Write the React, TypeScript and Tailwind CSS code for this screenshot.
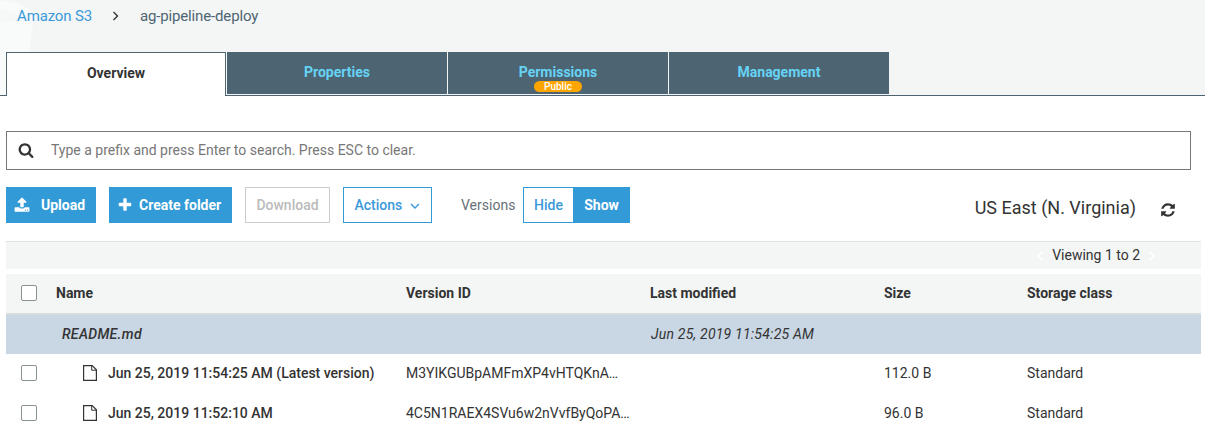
import type { ReactNode } from "react";

const paths = {
  search:
    "M1216 832q0-185-131.5-316.5t-316.5-131.5-316.5 131.5-131.5 316.5 131.5 316.5 316.5 131.5 316.5-131.5 131.5-316.5zm512 832q0 52-38 90t-90 38q-54 0-90-38l-343-342q-179 124-399 124-143 0-273.5-55.5t-225-150-150-225-55.5-273.5 55.5-273.5 150-225 225-150 273.5-55.5 273.5 55.5 225 150 150 225 55.5 273.5q0 220-124 399l343 343q37 37 37 90z",
  plus: "M1600 736v192q0 40-28 68t-68 28h-416v416q0 40-28 68t-68 28h-192q-40 0-68-28t-28-68v-416h-416q-40 0-68-28t-28-68v-192q0-40 28-68t68-28h416v-416q0-40 28-68t68-28h192q40 0 68 28t28 68v416h416q40 0 68 28t28 68z",
  upload:
    "M1344 1472q0-26-19-45t-45-19-45 19-19 45 19 45 45 19 45-19 19-45zm256 0q0-26-19-45t-45-19-45 19-19 45 19 45 45 19 45-19 19-45zm128-224v320q0 40-28 68t-68 28h-1472q-40 0-68-28t-28-68v-320q0-40 28-68t68-28h427q21 56 70.5 92t110.5 36h256q61 0 110.5-36t70.5-92h427q40 0 68 28t28 68zm-325-648q-17 40-59 40h-256v448q0 26-19 45t-45 19h-256q-26 0-45-19t-19-45v-448h-256q-42 0-59-40-17-39 14-69l448-448q18-19 45-19t45 19l448 448q31 30 14 69z",
  refresh:
    "M1639 1056q0 5-1 7-64 268-268 434.5t-478 166.5q-146 0-282.5-55t-243.5-157l-129 129q-19 19-45 19t-45-19-19-45v-448q0-26 19-45t45-19h448q26 0 45 19t19 45-19 45l-137 137q71 66 161 102t187 36q134 0 250-65t186-179q11-17 53-117 8-23 30-23h192q13 0 22.5 9.5t9.5 22.5zm25-800v448q0 26-19 45t-45 19h-448q-26 0-45-19t-19-45 19-45l138-138q-148-137-349-137-134 0-250 65t-186 179q-11 17-53 117-8 23-30 23h-199q-13 0-22.5-9.5t-9.5-22.5v-7q65-268 270-434.5t480-166.5q146 0 284 55.5t245 156.5l130-129q19-19 45-19t45 19 19 45z",
};

function Icon({ name, className }: { name: keyof typeof paths; className: string }) {
  return (
    <svg viewBox="0 0 1792 1792" fill="currentColor" className={className}>
      <path d={paths[name]} />
    </svg>
  );
}

function Chevron({ d, className }: { d: string; className: string }) {
  return (
    <svg viewBox="0 0 10 10" fill="none" stroke="currentColor" strokeWidth="1.4" className={className}>
      <path d={d} />
    </svg>
  );
}

function FileIcon() {
  return (
    <svg viewBox="0 0 14 16" fill="none" stroke="#333" className="h-4 w-3.5 shrink-0">
      <path d="M.6.6H9.2L13.4 4.8V15.4H.6z" strokeWidth="1.2" />
      <path d="M8.7.8V5.2H13.2" strokeWidth="1" />
    </svg>
  );
}

function Checkbox() {
  return <span className="block size-4 rounded-[2px] border border-[#879196] bg-white" />;
}

function Tab({ label, badge }: { label: string; badge?: string }) {
  return (
    <div className="relative flex h-[42px] w-[220px] justify-center bg-[#4d6572] pt-[10px] text-sm leading-5 font-bold text-[#66d3f5]">
      {label}
      {badge && (
        <span className="absolute top-[29px] left-[86px] flex h-[11px] w-12 items-center justify-center rounded-full bg-[#ffa500] text-[10px] leading-none font-medium text-white">
          {badge}
        </span>
      )}
    </div>
  );
}

const columns = "grid grid-cols-[50px_350px_244px_234px_143px_174px] items-center";

function Row({ name, version, size }: { name: ReactNode; version: string; size: string }) {
  return (
    <div className={`${columns} h-10`}>
      <span className="pl-[15px]"><Checkbox /></span>
      <span className="flex items-center gap-[11px] pl-[27px] font-medium whitespace-nowrap">
        <FileIcon />
        {name}
      </span>
      <span>{version}</span>
      <span />
      <span>{size}</span>
      <span>Standard</span>
    </div>
  );
}

export default function App() {
  return (
    <div className="h-[428px] w-[1205px] overflow-hidden bg-white font-[Roboto,sans-serif] text-sm leading-5 text-[#333]">
      <header className="relative h-24 border-b border-[#4d6572] bg-[#f4f6f6]">
        <svg className="absolute top-0 left-0 h-[95px] w-10" viewBox="0 0 40 95">
          <path d="M0 0C18 2 32 8 34 16L29 52V95H0z" fill="#f9fafa" />
          <path d="M0 10C10 11 18 14 21 18C18 21 9 22 0 22z" fill="#f6f8f8" />
        </svg>
        <nav className="relative flex h-[52px] items-start pt-[6px] pl-[17px] text-[15px]">
          <span className="w-[94px] tracking-[-0.15px] text-[#3b99d9]">Amazon S3</span>
          <Chevron d="M2.5 1L6.5 5L2.5 9" className="mt-[5px] size-[10px]" />
          <span className="pl-[19px] tracking-[-0.15px] text-[#4d6572]">ag-pipeline-deploy</span>
        </nav>
        <div className="relative flex gap-px pl-[6px]">
          <div className="flex h-11 w-[220px] justify-center border border-b-0 border-[#4d6572] bg-white pt-[10px] font-bold">
            Overview
          </div>
          <Tab label="Properties" />
          <Tab label="Permissions" badge="Public" />
          <Tab label="Management" />
        </div>
      </header>

      <main className="pr-1 pl-[6px]">
        <div className="mt-[35px] flex h-[39px] w-[1185px] items-center border border-[#777] pb-px pl-[11px] text-[#777]">
          <Icon name="search" className="size-4 text-[#333]" />
          <span className="pl-[17px]">Type a prefix and press Enter to search. Press ESC to clear.</span>
        </div>

        <div className="mt-[17px] flex h-9 items-center font-medium">
          <button className="mr-[13px] flex h-9 w-[90px] items-center gap-[11px] bg-[#329ad6] pl-2 font-bold text-white">
            <Icon name="upload" className="size-4" />
            Upload
          </button>
          <button className="mr-[13px] flex h-9 w-[123px] items-center gap-[7px] bg-[#329ad6] pl-[8px] font-bold text-white">
            <Icon name="plus" className="size-4" />
            <span className="-ml-px">Create folder</span>
          </button>
          <button className="mr-[13px] h-9 w-[85px] border border-[#ccc] text-[#bbb]">Download</button>
          <button className="flex h-9 w-[89px] items-center gap-2 border border-[#329ad6] pl-[10.5px] text-[#3b99d9]">
            Actions
            <Chevron d="M1 3L5 7L9 3" className="mt-px size-[10px]" />
          </button>
          <span className="w-[91px] pl-[29px] font-normal text-[#687078]">Versions</span>
          <button className="h-9 w-[50px] border border-r-0 border-[#329ad6] text-[#3b99d9]">Hide</button>
          <button className="h-9 w-[57px] bg-[#329ad6] font-bold text-white">Show</button>
          <span className="ml-auto pt-[6px] text-lg leading-6 font-normal">US East (N. Virginia)</span>
          <Icon name="refresh" className="mt-[9px] mr-[25px] ml-6 size-4" />
        </div>

        <div className="mt-[18px] flex h-7 items-center justify-end gap-[7px] border-t border-[#dfe2e2] bg-[#f4f6f6] pr-[44px]">
          <Chevron d="M7 1L3 5L7 9" className="mt-px size-[10px] text-white" />
          <span className="pb-0.5">Viewing 1 to 2</span>
          <Chevron d="M3 1L7 5L3 9" className="mt-px size-[10px] text-white" />
        </div>

        <div className={`${columns} mt-[5px] h-[41px] border-b-2 border-[#dadddd] bg-[#f4f6f6] pb-px font-bold`}>
          <span className="pl-[15px]"><Checkbox /></span>
          <span>Name</span>
          <span>Version ID</span>
          <span>Last modified</span>
          <span>Size</span>
          <span>Storage class</span>
        </div>
        <div className={`${columns} h-[39px] bg-[#c9d6e3] pb-px italic`}>
          <span />
          <span className="pl-[6px] font-medium tracking-[0.33px]">README.md</span>
          <span />
          <span className="pl-px tracking-[0.22px]">Jun 25, 2019 11:54:25 AM</span>
        </div>
        <div className="-mt-px">
          <Row name="Jun 25, 2019 11:54:25 AM (Latest version)" version="M3YIKGUBpAMFmXP4vHTQKnA…" size="112.0 B" />
          <Row name="Jun 25, 2019 11:52:10 AM" version="4C5N1RAEX4SVu6w2nVvfByQoPA…" size="96.0 B" />
        </div>
      </main>
    </div>
  );
}
